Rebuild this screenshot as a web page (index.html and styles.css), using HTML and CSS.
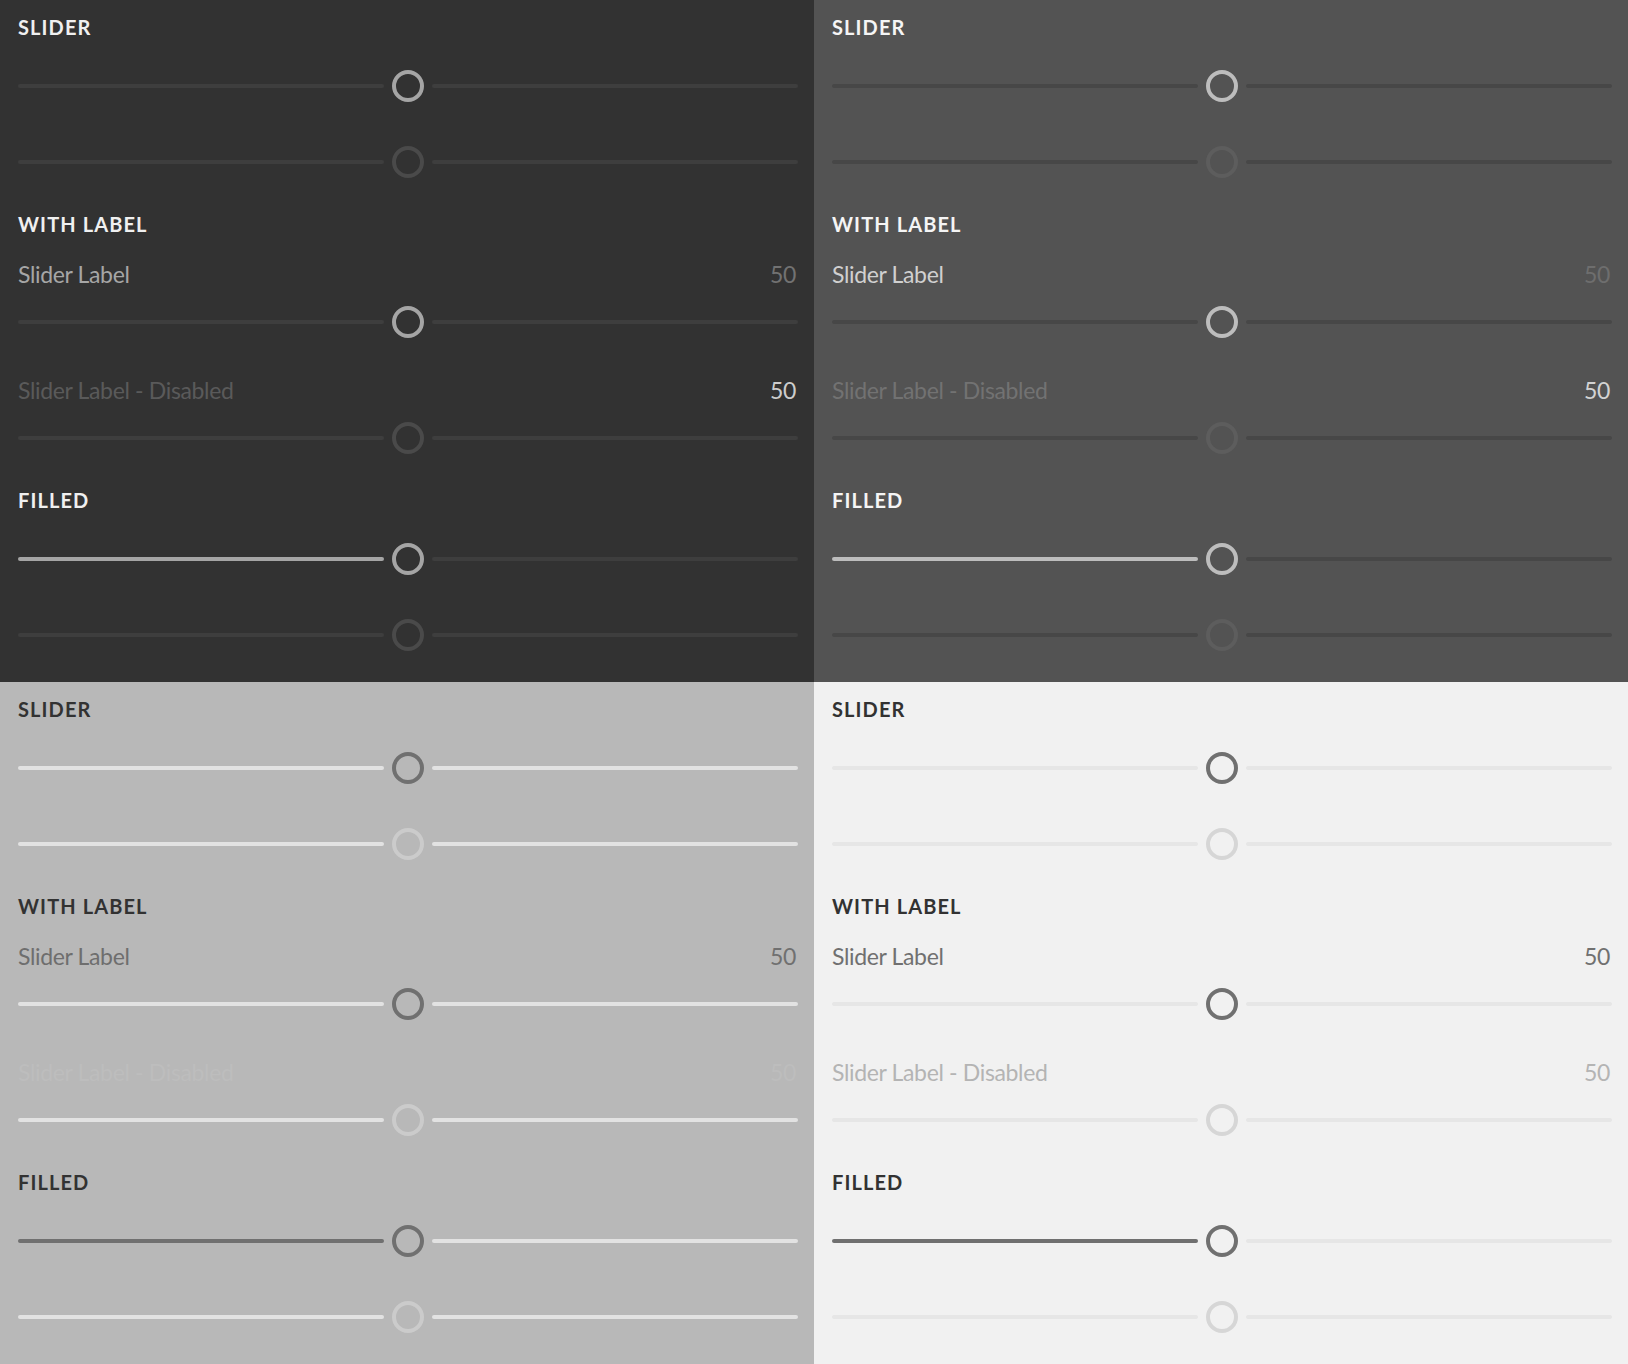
FILE: index.html
```html
<!DOCTYPE html>
<html lang="en">
<head>
<meta charset="utf-8">
<title>Slider</title>
<link rel="stylesheet" href="styles.css">
</head>
<body>
<main class="grid">
  <section class="quad theme-darkest">
    <div class="group">
      <h2 class="heading">Slider</h2>
      <div class="stack">
        <div class="slider"><span class="track"></span><span class="thumb"></span><span class="track"></span></div>
        <div class="slider is-disabled"><span class="track"></span><span class="thumb"></span><span class="track"></span></div>
      </div>
    </div>
    <div class="group">
      <h2 class="heading">With Label</h2>
      <div class="field">
        <div class="field-label"><span class="label">Slider Label</span><span class="value">50</span></div>
        <div class="slider"><span class="track"></span><span class="thumb"></span><span class="track"></span></div>
      </div>
      <div class="field is-disabled">
        <div class="field-label"><span class="label">Slider Label - Disabled</span><span class="value">50</span></div>
        <div class="slider is-disabled"><span class="track"></span><span class="thumb"></span><span class="track"></span></div>
      </div>
    </div>
    <div class="group">
      <h2 class="heading">Filled</h2>
      <div class="stack">
        <div class="slider is-filled"><span class="track"></span><span class="thumb"></span><span class="track"></span></div>
        <div class="slider is-disabled"><span class="track"></span><span class="thumb"></span><span class="track"></span></div>
      </div>
    </div>
  </section>

  <section class="quad theme-dark">
    <div class="group">
      <h2 class="heading">Slider</h2>
      <div class="stack">
        <div class="slider"><span class="track"></span><span class="thumb"></span><span class="track"></span></div>
        <div class="slider is-disabled"><span class="track"></span><span class="thumb"></span><span class="track"></span></div>
      </div>
    </div>
    <div class="group">
      <h2 class="heading">With Label</h2>
      <div class="field">
        <div class="field-label"><span class="label">Slider Label</span><span class="value">50</span></div>
        <div class="slider"><span class="track"></span><span class="thumb"></span><span class="track"></span></div>
      </div>
      <div class="field is-disabled">
        <div class="field-label"><span class="label">Slider Label - Disabled</span><span class="value">50</span></div>
        <div class="slider is-disabled"><span class="track"></span><span class="thumb"></span><span class="track"></span></div>
      </div>
    </div>
    <div class="group">
      <h2 class="heading">Filled</h2>
      <div class="stack">
        <div class="slider is-filled"><span class="track"></span><span class="thumb"></span><span class="track"></span></div>
        <div class="slider is-disabled"><span class="track"></span><span class="thumb"></span><span class="track"></span></div>
      </div>
    </div>
  </section>

  <section class="quad theme-light">
    <div class="group">
      <h2 class="heading">Slider</h2>
      <div class="stack">
        <div class="slider"><span class="track"></span><span class="thumb"></span><span class="track"></span></div>
        <div class="slider is-disabled"><span class="track"></span><span class="thumb"></span><span class="track"></span></div>
      </div>
    </div>
    <div class="group">
      <h2 class="heading">With Label</h2>
      <div class="field">
        <div class="field-label"><span class="label">Slider Label</span><span class="value">50</span></div>
        <div class="slider"><span class="track"></span><span class="thumb"></span><span class="track"></span></div>
      </div>
      <div class="field is-disabled">
        <div class="field-label"><span class="label">Slider Label - Disabled</span><span class="value">50</span></div>
        <div class="slider is-disabled"><span class="track"></span><span class="thumb"></span><span class="track"></span></div>
      </div>
    </div>
    <div class="group">
      <h2 class="heading">Filled</h2>
      <div class="stack">
        <div class="slider is-filled"><span class="track"></span><span class="thumb"></span><span class="track"></span></div>
        <div class="slider is-disabled"><span class="track"></span><span class="thumb"></span><span class="track"></span></div>
      </div>
    </div>
  </section>

  <section class="quad theme-lightest">
    <div class="group">
      <h2 class="heading">Slider</h2>
      <div class="stack">
        <div class="slider"><span class="track"></span><span class="thumb"></span><span class="track"></span></div>
        <div class="slider is-disabled"><span class="track"></span><span class="thumb"></span><span class="track"></span></div>
      </div>
    </div>
    <div class="group">
      <h2 class="heading">With Label</h2>
      <div class="field">
        <div class="field-label"><span class="label">Slider Label</span><span class="value">50</span></div>
        <div class="slider"><span class="track"></span><span class="thumb"></span><span class="track"></span></div>
      </div>
      <div class="field is-disabled">
        <div class="field-label"><span class="label">Slider Label - Disabled</span><span class="value">50</span></div>
        <div class="slider is-disabled"><span class="track"></span><span class="thumb"></span><span class="track"></span></div>
      </div>
    </div>
    <div class="group">
      <h2 class="heading">Filled</h2>
      <div class="stack">
        <div class="slider is-filled"><span class="track"></span><span class="thumb"></span><span class="track"></span></div>
        <div class="slider is-disabled"><span class="track"></span><span class="thumb"></span><span class="track"></span></div>
      </div>
    </div>
  </section>
</main>
</body>
</html>
```

FILE: styles.css
```css
* { box-sizing: border-box; }

html, body {
  margin: 0;
  padding: 0;
}

body {
  font-family: Lato, "Open Sans", sans-serif;
  width: 1628px;
  height: 1364px;
  overflow: hidden;
}

.grid {
  display: grid;
  grid-template-columns: 814px 814px;
  grid-template-rows: 682px 682px;
}

.quad {
  padding: 15px 16px 0 18px;
  background: var(--bg);
}

.group + .group { margin-top: 34px; }

.heading {
  margin: 0;
  height: 24px;
  font-size: 20px;
  line-height: 24px;
  font-weight: 700;
  text-transform: uppercase;
  letter-spacing: 1.1px;
  color: var(--heading);
}

.stack {
  display: flex;
  flex-direction: column;
  gap: 44px;
  margin-top: 31px;
}

.field { margin-top: 38px; }
.heading + .field { margin-top: 24px; }

.field-label {
  display: flex;
  justify-content: space-between;
  font-size: 23px;
  letter-spacing: -0.35px;
  line-height: 29px;
  height: 29px;
  margin-bottom: 17px;
  padding-right: 2px;
}

.label { color: var(--label); }
.value { color: var(--value); }

.field.is-disabled .label { color: var(--label-disabled); }
.field.is-disabled .value { color: var(--value-disabled); }

.slider {
  display: flex;
  align-items: center;
  height: 32px;
}

.track {
  flex: 1;
  height: 4px;
  border-radius: 2px;
  background: var(--track);
}

.thumb {
  flex: none;
  width: 32px;
  height: 32px;
  margin: 0 8px;
  border-radius: 50%;
  border: 4px solid var(--thumb);
}

.slider.is-filled .track:first-child { background: var(--fill); }

.slider.is-disabled .thumb { border-color: var(--thumb-disabled); }

.theme-darkest {
  --bg: #323232;
  --heading: #f0f0f0;
  --track: #3e3e3e;
  --thumb: #a5a5a5;
  --thumb-disabled: #4a4a4a;
  --fill: #a5a5a5;
  --label: #a6a6a6;
  --value: #727272;
  --label-disabled: #5a5a5a;
  --value-disabled: #cdcdcd;
}

.theme-dark {
  --bg: #535353;
  --heading: #f5f5f5;
  --track: #474747;
  --thumb: #bdbdbd;
  --thumb-disabled: #5d5d5d;
  --fill: #bdbdbd;
  --label: #d0d0d0;
  --value: #6e6e6e;
  --label-disabled: #727272;
  --value-disabled: #d3d3d3;
}

.theme-light {
  --bg: #b8b8b8;
  --heading: #323232;
  --track: #e2e2e2;
  --thumb: #707070;
  --thumb-disabled: #cbcbcb;
  --fill: #707070;
  --label: #6e6e6e;
  --value: #707070;
  --label-disabled: #bdbdbd;
  --value-disabled: #bdbdbd;
}

.theme-lightest {
  --bg: #f1f1f1;
  --heading: #323232;
  --track: #e6e6e6;
  --thumb: #707070;
  --thumb-disabled: #d6d6d6;
  --fill: #707070;
  --label: #707070;
  --value: #707070;
  --label-disabled: #b4b4b4;
  --value-disabled: #b4b4b4;
}
```
